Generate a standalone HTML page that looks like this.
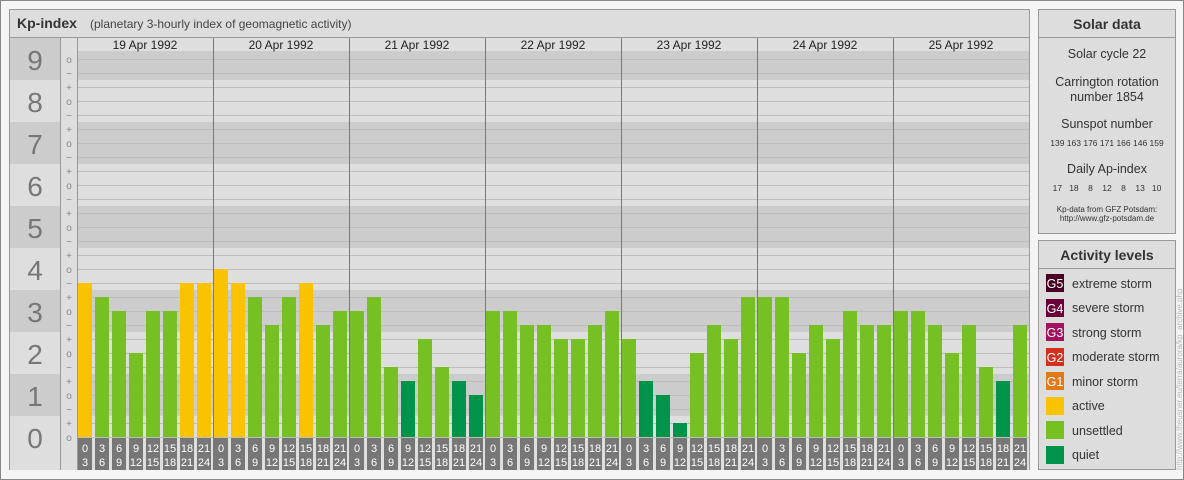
<!DOCTYPE html>
<html><head><meta charset="utf-8"><style>
html,body{margin:0;padding:0;background:#f2f2f2}
svg{display:block}
text{font-family:"Liberation Sans",sans-serif}
</style></head><body>
<svg width="1184" height="480" viewBox="0 0 1184 480" xmlns="http://www.w3.org/2000/svg">
<rect x="0.5" y="0.5" width="1183" height="479" fill="#f4f4f4" stroke="#888"/>
<rect x="9.5" y="9.5" width="1020" height="460" fill="#dddddd" stroke="#999"/>
<line x1="10" y1="37.5" x2="1029" y2="37.5" stroke="#999"/>
<text x="17" y="28" font-size="14" font-weight="bold" fill="#333">Kp-index</text>
<text x="90" y="28" font-size="12" fill="#444">(planetary 3-hourly index of geomagnetic activity)</text>
<g id="bands"></g>
<g id="grid"></g>
<g font-size="28" fill="#777" text-anchor="middle">
<text x="35" y="70">9</text><text x="35" y="112">8</text><text x="35" y="154">7</text><text x="35" y="196">6</text><text x="35" y="238">5</text><text x="35" y="280">4</text><text x="35" y="322">3</text><text x="35" y="364">2</text><text x="35" y="406">1</text><text x="35" y="448">0</text>
</g>
<line x1="60.5" y1="38" x2="60.5" y2="470" stroke="#999"/>
<line x1="77.5" y1="38" x2="77.5" y2="470" stroke="#999"/>
<g font-size="10" fill="#888" text-anchor="middle">
<text x="69" y="63">o</text><text x="69" y="77">−</text>
<text x="69" y="91">+</text><text x="69" y="105">o</text><text x="69" y="119">−</text>
<text x="69" y="133">+</text><text x="69" y="147">o</text><text x="69" y="161">−</text>
<text x="69" y="175">+</text><text x="69" y="189">o</text><text x="69" y="203">−</text>
<text x="69" y="217">+</text><text x="69" y="231">o</text><text x="69" y="245">−</text>
<text x="69" y="259">+</text><text x="69" y="273">o</text><text x="69" y="287">−</text>
<text x="69" y="301">+</text><text x="69" y="315">o</text><text x="69" y="329">−</text>
<text x="69" y="343">+</text><text x="69" y="357">o</text><text x="69" y="371">−</text>
<text x="69" y="385">+</text><text x="69" y="399">o</text><text x="69" y="413">−</text>
<text x="69" y="427">+</text><text x="69" y="441">o</text>
</g>
<g id="bars"></g>
<rect x="78" y="38" width="951" height="13" fill="#dedede"/>
<g font-size="12" fill="#222" text-anchor="middle">
<text x="145" y="49">19 Apr 1992</text><text x="281" y="49">20 Apr 1992</text><text x="417" y="49">21 Apr 1992</text><text x="553" y="49">22 Apr 1992</text><text x="689" y="49">23 Apr 1992</text><text x="825" y="49">24 Apr 1992</text><text x="961" y="49">25 Apr 1992</text>
</g>
<g id="seps"></g>
<defs>
<g id="tl">
<g fill="#777"><rect x="1" y="438" width="14" height="32"/><rect x="18" y="438" width="14" height="32"/><rect x="35" y="438" width="14" height="32"/><rect x="52" y="438" width="14" height="32"/><rect x="69" y="438" width="14" height="32"/><rect x="86" y="438" width="14" height="32"/><rect x="103" y="438" width="14" height="32"/><rect x="120" y="438" width="14" height="32"/></g>
<g fill="#fff" font-size="11" text-anchor="middle">
<text x="8" y="452">0</text><text x="8" y="466">3</text>
<text x="25" y="452">3</text><text x="25" y="466">6</text>
<text x="42" y="452">6</text><text x="42" y="466">9</text>
<text x="59" y="452">9</text><text x="59" y="466">12</text>
<text x="76" y="452">12</text><text x="76" y="466">15</text>
<text x="93" y="452">15</text><text x="93" y="466">18</text>
<text x="110" y="452">18</text><text x="110" y="466">21</text>
<text x="127" y="452">21</text><text x="127" y="466">24</text>
</g></g></defs>
<use href="#tl" x="77"/><use href="#tl" x="213"/><use href="#tl" x="349"/><use href="#tl" x="485"/><use href="#tl" x="621"/><use href="#tl" x="757"/><use href="#tl" x="893"/>
<rect x="1038.5" y="9.5" width="137" height="224" fill="#dddddd" stroke="#999"/>
<line x1="1039" y1="37.5" x2="1175" y2="37.5" stroke="#999"/>
<g text-anchor="middle" fill="#333">
<text x="1107" y="29" font-size="14" font-weight="bold">Solar data</text>
<text x="1107" y="58" font-size="12.5">Solar cycle 22</text>
<text x="1107" y="86" font-size="12.5">Carrington rotation</text>
<text x="1107" y="101" font-size="12.5">number 1854</text>
<text x="1107" y="128" font-size="12.5">Sunspot number</text>
<text x="1107" y="146" font-size="8.5">139 163 176 171 166 146 159</text>
<text x="1107" y="173" font-size="12.5">Daily Ap-index</text>
<text x="1107" y="191" font-size="8.5" xml:space="preserve">17   18    8    12    8    13   10</text>
<text x="1107" y="212" font-size="8">Kp-data from GFZ Potsdam:</text>
<text x="1107" y="221" font-size="8">http://www.gfz-potsdam.de</text>
</g>
<rect x="1038.5" y="240.5" width="137" height="229" fill="#dddddd" stroke="#999"/>
<line x1="1039" y1="268.5" x2="1175" y2="268.5" stroke="#999"/>
<text x="1107" y="260" font-size="14" font-weight="bold" fill="#333" text-anchor="middle">Activity levels</text>
<g font-size="12.5">
<rect x="1046" y="274" width="18" height="18" fill="#4a0020"/><text x="1055" y="288" fill="#fff" text-anchor="middle">G5</text><text x="1072" y="288" fill="#333">extreme storm</text>
<rect x="1046" y="299" width="18" height="18" fill="#6b0039"/><text x="1055" y="313" fill="#fff" text-anchor="middle">G4</text><text x="1072" y="312" fill="#333">severe storm</text>
<rect x="1046" y="323" width="18" height="18" fill="#a1135f"/><text x="1055" y="337" fill="#fff" text-anchor="middle">G3</text><text x="1072" y="337" fill="#333">strong storm</text>
<rect x="1046" y="348" width="18" height="18" fill="#d2301d"/><text x="1055" y="362" fill="#fff" text-anchor="middle">G2</text><text x="1072" y="361" fill="#333">moderate storm</text>
<rect x="1046" y="372" width="18" height="18" fill="#e07a17"/><text x="1055" y="386" fill="#fff" text-anchor="middle">G1</text><text x="1072" y="386" fill="#333">minor storm</text>
<rect x="1046" y="397" width="18" height="18" fill="#f9c300"/><text x="1072" y="410" fill="#333">active</text>
<rect x="1046" y="421" width="18" height="18" fill="#77c024"/><text x="1072" y="435" fill="#333">unsettled</text>
<rect x="1046" y="446" width="18" height="18" fill="#00934a"/><text x="1072" y="459" fill="#333">quiet</text>
</g>
<text transform="translate(1182,470) rotate(-90)" font-size="8" fill="#bbb">http://www.theusner.eu/terra/aurora/kp_archive.php</text>
</svg>
<script>
var NS="http://www.w3.org/2000/svg";
function el(p,t,a){var e=document.createElementNS(NS,t);for(var k in a)e.setAttribute(k,a[k]);p.appendChild(e);return e;}
var bands=document.getElementById('bands'),grid=document.getElementById('grid'),bars=document.getElementById('bars'),seps=document.getElementById('seps');
el(bands,'rect',{x:10,y:38,width:1019,height:432,fill:'#dedede'});
for(var k=9;k>=1;k-=2){var y0=437-42*k-21;if(y0<38)y0=38;el(bands,'rect',{x:10,y:y0,width:50,height:437-42*k+21-y0,fill:'#cccccc'});el(bands,'rect',{x:77,y:y0,width:952,height:437-42*k+21-y0,fill:'#cccccc'});}
for(var t=0;t<=27;t++){var y=437-14*t+0.5;el(grid,'line',{x1:77,y1:y,x2:1029,y2:y,stroke:'#bdbdbd'});}
var data=[[11,10,9,6,9,9,11,11],[12,11,10,8,10,11,8,9],[9,10,5,4,7,5,4,3],[9,9,8,8,7,7,8,9],[7,4,3,1,6,8,7,10],[10,10,6,8,7,9,8,8],[9,9,8,6,8,5,4,8]];
for(var d=0;d<7;d++)for(var i=0;i<8;i++){var v=data[d][i];var c=v>=11?'#f9c300':(v<=4?'#00934a':'#77c024');el(bars,'rect',{x:77+136*d+17*i+1,y:437-14*v,width:14,height:14*v,fill:c});}
for(var d=1;d<7;d++){var x=77+136*d+0.5;el(seps,'line',{x1:x,y1:38,x2:x,y2:470,stroke:'#777'});}
</script>
</body></html>
